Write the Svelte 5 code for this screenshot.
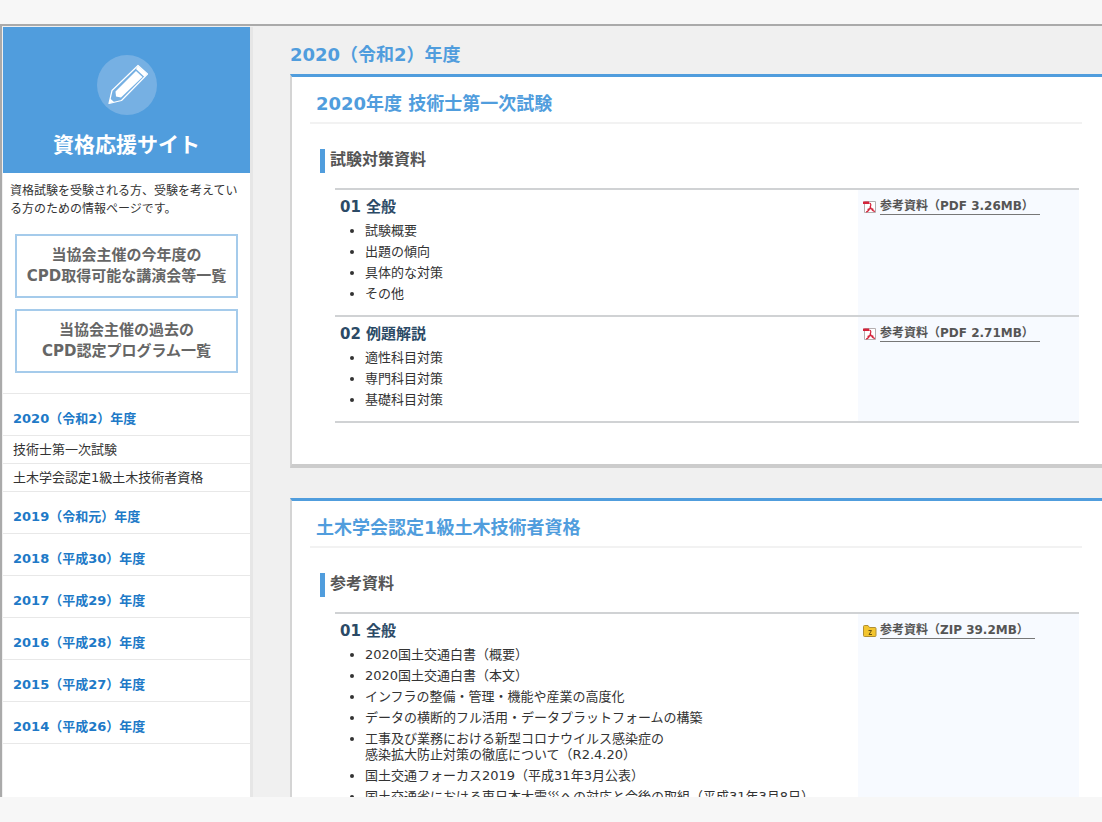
<script>
  const years = [
    {
      label: "2020（令和2）年度",
      exams: ["技術士第一次試験", "土木学会認定1級土木技術者資格"]
    },
    { label: "2019（令和元）年度", exams: [] },
    { label: "2018（平成30）年度", exams: [] },
    { label: "2017（平成29）年度", exams: [] },
    { label: "2016（平成28）年度", exams: [] },
    { label: "2015（平成27）年度", exams: [] },
    { label: "2014（平成26）年度", exams: [] }
  ];

  const sections = [
    {
      title: "2020年度 技術士第一次試験",
      subtitle: "試験対策資料",
      rows: [
        {
          name: "01 全般",
          items: ["試験概要", "出題の傾向", "具体的な対策", "その他"],
          type: "pdf",
          link: "参考資料（PDF 3.26MB）"
        },
        {
          name: "02 例題解説",
          items: ["適性科目対策", "専門科目対策", "基礎科目対策"],
          type: "pdf",
          link: "参考資料（PDF 2.71MB）"
        }
      ]
    },
    {
      title: "土木学会認定1級土木技術者資格",
      subtitle: "参考資料",
      rows: [
        {
          name: "01 全般",
          items: [
            "2020国土交通白書（概要）",
            "2020国土交通白書（本文）",
            "インフラの整備・管理・機能や産業の高度化",
            "データの横断的フル活用・データプラットフォームの構築",
            "工事及び業務における新型コロナウイルス感染症の\n感染拡大防止対策の徹底について（R2.4.20）",
            "国土交通フォーカス2019（平成31年3月公表）",
            "国土交通省における東日本大震災への対応と今後の取組（平成31年3月8日）"
          ],
          type: "zip",
          link: "参考資料（ZIP 39.2MB）"
        }
      ]
    }
  ];
</script>

<div class="page">
  <div class="frame">
    <aside class="sidebar">
      <div class="brand">
        <svg width="60" height="60" viewBox="0 0 60 60" aria-hidden="true">
          <circle cx="30" cy="30" r="30" fill="#76b0e3" />
          <path d="M41 10.5 L50.5 19 L24.5 45.5 L12 48.5 L15 35.5 Z" fill="none" stroke="#fff" stroke-width="1.2" stroke-linejoin="round" />
          <path d="M41 11 L50 19 L47.5 22 L39 14 Z" fill="#fff" />
          <path d="M39 16 L45.5 22 L24 42.5 L19 41.5 L18.5 36.5 Z" fill="#fff" />
          <path d="M13.2 43.5 L17 47 L12 48.5 Z" fill="#fff" />
        </svg>
        <h1>資格応援サイト</h1>
      </div>
      <p class="intro">資格試験を受験される方、受験を考えている方のための情報ページです。</p>
      <div class="banners">
        <a href="#cpd-list">当協会主催の今年度の<br />CPD取得可能な講演会等一覧</a>
        <a href="#cpd-past">当協会主催の過去の<br />CPD認定プログラム一覧</a>
      </div>
      <nav>
        {#each years as year}
          <a class="year" href="#year">{year.label}</a>
          {#each year.exams as exam}
            <a class="exam" href="#exam">{exam}</a>
          {/each}
        {/each}
      </nav>
    </aside>

    <main>
      <h2>2020（令和2）年度</h2>
      {#each sections as section}
        <section>
          <h3>{section.title}</h3>
          <h4>{section.subtitle}</h4>
          <table>
            <tbody>
              {#each section.rows as row}
                <tr>
                  <td class="content">
                    <h5>{row.name}</h5>
                    <ul>
                      {#each row.items as item}
                        <li>{item}</li>
                      {/each}
                    </ul>
                  </td>
                  <td class="file">
                    <div class="download">
                      {#if row.type === "pdf"}
                        <svg width="14" height="14" viewBox="0 0 14 14" aria-hidden="true">
                          <path d="M1.5 1.5 H12.5 V12.5 H1.5 Z" fill="#fff" stroke="#b5aeb0" />
                          <path d="M0 1.5 H6 V4 H0 Z" fill="#d4233b" />
                          <path d="M6 3 C8.500 3 8 5.500 7 8 C6 10.200 4.500 12 3 12 M7 6 C8 9 10 11 12 11.5 M4.500 9.500 C6.500 8.500 9 8.500 10.500 9.500" fill="none" stroke="#d4233b" stroke-width="1.2" />
                        </svg>
                      {:else}
                        <svg width="14" height="14" viewBox="0 0 14 14" aria-hidden="true">
                          <path d="M0.5 2.5 Q0.5 1.5 1.5 1.5 H5 L6.5 3.5 H12 Q13 3.5 13 4.500 V11.500 Q13 12.500 12 12.500 H1.500 Q0.500 12.500 0.500 11.500 Z" fill="#f3c52f" stroke="#b08f35" />
                          <path d="M5.5 6.500 H8.500 L6 10.500 H9" fill="none" stroke="#6b5310" />
                        </svg>
                      {/if}
                      <a href="#download">{row.link}</a>
                    </div>
                  </td>
                </tr>
              {/each}
            </tbody>
          </table>
        </section>
      {/each}
    </main>
  </div>
</div>

<style>
  :global(body) {
    margin: 0;
    background: #f7f7f7;
  }
  .page {
    box-sizing: border-box;
    height: 100vh;
    padding: 24px 0 25px;
    color: #333;
    font-family: "DejaVu Sans", "Noto Sans CJK JP", sans-serif;
    font-size: 13px;
  }
  .frame {
    display: flex;
    box-sizing: border-box;
    height: 100%;
    padding: 1px 0 0 1px;
    overflow: hidden;
    border-top: 2px solid #aaa;
    border-left: 2px solid #aaa;
    background: #f0f0f0;
  }
  h1,
  h2,
  h3,
  h4,
  h5,
  p,
  ul {
    margin: 0;
  }
  a {
    color: inherit;
    text-decoration: none;
  }
  .sidebar {
    flex: none;
    width: 247px;
    border-right: 3px solid #e6e6e6;
    background: #fff;
  }
  .brand {
    padding: 28px 0 13px;
    background: #509ddd;
    color: #fff;
    text-align: center;
  }
  .brand svg {
    display: block;
    margin: 0 auto 15px;
  }
  h1 {
    font-size: 21px;
    line-height: 30px;
  }
  .intro {
    padding: 9px 7px 16px;
    font-size: 12px;
    line-height: 18px;
  }
  .banners {
    display: flex;
    flex-direction: column;
    gap: 11px;
    padding: 0 12px 20px;
    border-bottom: 1px solid #e8e8e8;
  }
  .banners a {
    padding: 9px 0;
    border: 2px solid #a5cbeb;
    color: #666;
    font-size: 15px;
    font-weight: bold;
    line-height: 21px;
    text-align: center;
    white-space: nowrap;
  }
  nav a {
    display: block;
    padding-left: 10px;
    border-bottom: 1px solid #e8e8e8;
  }
  .year {
    padding-top: 16px;
    padding-bottom: 7px;
    color: #2079c7;
    font-weight: bold;
    line-height: 18px;
  }
  .exam {
    padding-top: 5px;
    padding-bottom: 4px;
    line-height: 18px;
  }
  main {
    flex: 1;
    min-width: 0;
    padding: 16px 0 0 37px;
  }
  h2,
  h3 {
    color: #509ddd;
    font-size: 18px;
    line-height: 24px;
  }
  h2 {
    margin-bottom: 7px;
  }
  section {
    margin-bottom: 30px;
    padding: 15px 20px 41px 18px;
    border-top: 3px solid #509ddd;
    border-bottom: 4px solid #ccc;
    border-left: 2px solid #d4d4d4;
    background: #fff;
  }
  h3 {
    padding: 0 6px 6px;
    border-bottom: 2px solid #f2f2f2;
  }
  h4 {
    margin: 25px 0 15px 10px;
    padding-left: 5px;
    border-left: 5px solid #509ddd;
    color: #555;
    font-size: 16px;
    line-height: 22px;
    padding-bottom: 2px;
  }
  table {
    width: calc(100% - 28px);
    margin-left: 25px;
    border-spacing: 0;
    border-top: 2px solid #d0d2d4;
  }
  td {
    padding: 7px 5px 8px;
    border-bottom: 2px solid #d0d2d4;
    vertical-align: top;
  }
  .file {
    box-sizing: border-box;
    width: 221px;
    background: #f7faff;
  }
  h5 {
    margin-bottom: 6px;
    color: #2b4a66;
    font-size: 15px;
    line-height: 20px;
  }
  ul {
    padding-left: 25px;
  }
  li {
    margin-bottom: 5px;
    line-height: 16px;
    white-space: pre-line;
  }
  .download {
    display: flex;
    align-items: center;
    gap: 3px;
    padding-top: 1px;
    white-space: nowrap;
  }
  .download a {
    padding-right: 6px;
    border-bottom: 1px solid #777;
    color: #555;
    font-size: 12px;
    font-weight: bold;
    line-height: 16px;
  }
</style>
